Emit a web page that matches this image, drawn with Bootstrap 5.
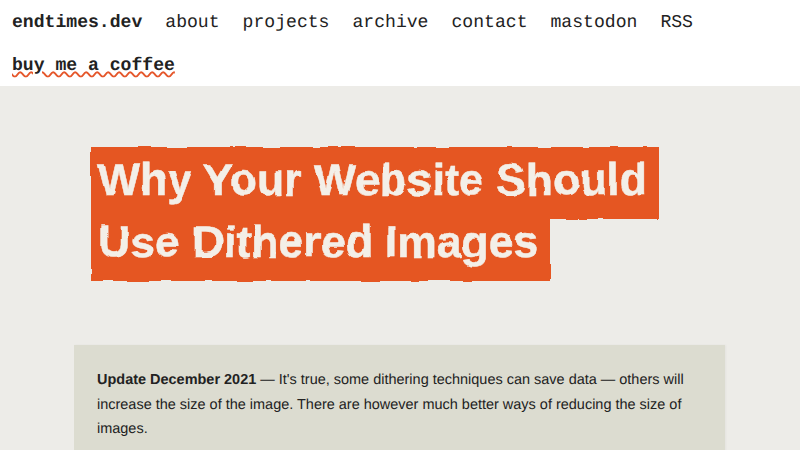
<!DOCTYPE html>
<html lang="en">
<head>
    <meta charset="UTF-8">
    <meta name="viewport" content="width=device-width, initial-scale=1.0">
    <title>Why Your Website Should Use Dithered Images</title>
    <link href="https://cdn.jsdelivr.net/npm/bootstrap@5.3.0/dist/css/bootstrap.min.css" rel="stylesheet">
    <style>
        body {
            background: #edece8;
            color: #222;
            font-family: "Liberation Sans", Arial, sans-serif;
            text-rendering: geometricPrecision;
            height: 450px;
            overflow: hidden;
        }
        .site-nav {
            background: #fff;
            height: 86px;
            padding: 1.5px 12px 0;
            column-gap: 23px;
            font-family: "Liberation Mono", monospace;
            font-size: 18.1px;
            line-height: 43px;
        }
        .site-nav a {
            color: #222;
            text-decoration: none;
        }
        .site-nav .brand-link {
            font-weight: 700;
        }
        .site-nav .coffee-link {
            font-weight: 700;
            text-decoration: underline wavy #e5562a;
            text-decoration-thickness: 1.5px;
            text-underline-offset: 1px;
        }
        .hero-wrap {
            padding: 64px 0 0 91px;
            height: 259px;
        }
        .hero-title {
            width: 600px;
            margin: 0;
            font-size: 44.5px;
            font-weight: 700;
            line-height: 62px;
            color: #f3efe8;
            -webkit-text-stroke: 0.5px #f3efe8;
            filter: url(#rough);
        }
        .hero-title span {
            background: #e55722;
            padding: 9px 12px 14px 7px;
            -webkit-box-decoration-break: clone;
            box-decoration-break: clone;
        }
        .update-box {
            margin-left: 74px;
            width: 651px;
            background: #dcdcd0;
            padding: 23px;
            font-size: 14.47px;
            line-height: 24.5px;
            box-shadow: 1px 0 2px rgba(0, 0, 0, 0.04);
        }
        .update-box p {
            margin: 0;
        }
    </style>
</head>
<body>
    <svg width="0" height="0" class="position-absolute">
        <filter id="rough" x="-5%" y="-5%" width="110%" height="110%">
            <feTurbulence type="fractalNoise" baseFrequency="0.03" numOctaves="3" seed="4" result="noise"/>
            <feDisplacementMap in="SourceGraphic" in2="noise" scale="4" xChannelSelector="R" yChannelSelector="G"/>
        </filter>
    </svg>

    <nav class="site-nav d-flex flex-wrap align-content-start">
        <a class="brand-link" href="#">endtimes.dev</a>
        <a href="#">about</a>
        <a href="#">projects</a>
        <a href="#">archive</a>
        <a href="#">contact</a>
        <a href="#">mastodon</a>
        <a href="#">RSS</a>
        <a class="coffee-link" href="#">buy me a coffee</a>
    </nav>

    <header class="hero-wrap">
        <h1 class="hero-title"><span>Why Your Website Should Use Dithered Images</span></h1>
    </header>

    <div class="update-box">
        <p><strong>Update December 2021</strong> — It's true, some dithering techniques can save data — others will increase the size of the image. There are however much better ways of reducing the size of images.</p>
    </div>

    <script src="https://cdn.jsdelivr.net/npm/bootstrap@5.3.0/dist/js/bootstrap.bundle.min.js"></script>
</body>
</html>
